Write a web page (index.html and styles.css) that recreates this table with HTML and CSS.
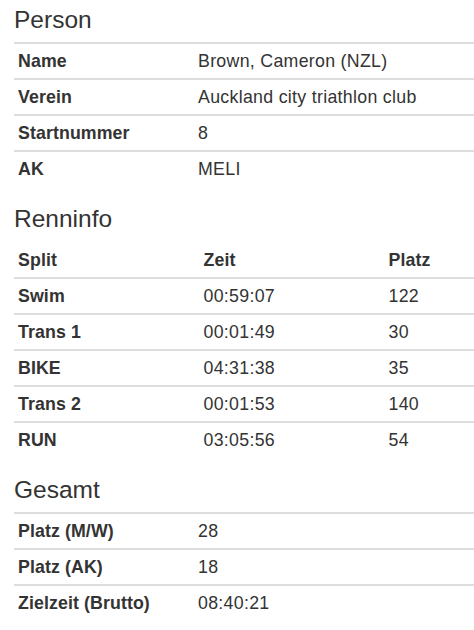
FILE: index.html
```html
<!DOCTYPE html>
<html lang="de">
<head>
<meta charset="utf-8">
<title>Ergebnis</title>
<link rel="stylesheet" href="styles.css">
</head>
<body>
<main class="page">
  <section class="block">
    <h3 class="title">Person</h3>
    <table class="info two-col">
      <tbody>
        <tr><th>Name</th><td>Brown, Cameron (NZL)</td></tr>
        <tr><th>Verein</th><td>Auckland city triathlon club</td></tr>
        <tr><th>Startnummer</th><td>8</td></tr>
        <tr><th>AK</th><td>MELI</td></tr>
      </tbody>
    </table>
  </section>
  <section class="block">
    <h3 class="title">Renninfo</h3>
    <table class="info three-col">
      <thead>
        <tr><th>Split</th><th>Zeit</th><th>Platz</th></tr>
      </thead>
      <tbody>
        <tr><th>Swim</th><td>00:59:07</td><td>122</td></tr>
        <tr><th>Trans 1</th><td>00:01:49</td><td>30</td></tr>
        <tr><th>BIKE</th><td>04:31:38</td><td>35</td></tr>
        <tr><th>Trans 2</th><td>00:01:53</td><td>140</td></tr>
        <tr><th>RUN</th><td>03:05:56</td><td>54</td></tr>
      </tbody>
    </table>
  </section>
  <section class="block">
    <h3 class="title">Gesamt</h3>
    <table class="info two-col">
      <tbody>
        <tr><th>Platz (M/W)</th><td>28</td></tr>
        <tr><th>Platz (AK)</th><td>18</td></tr>
        <tr><th>Zielzeit (Brutto)</th><td>08:40:21</td></tr>
      </tbody>
    </table>
  </section>
</main>
</body>
</html>
```
FILE: styles.css
```css
html, body {
  margin: 0;
  padding: 0;
  background: #ffffff;
}

body {
  font-family: "Liberation Sans", Arial, Helvetica, sans-serif;
  color: #333333;
}

.page {
  padding: 6px 0 0 14px;
  display: flex;
  flex-direction: column;
  gap: 19px;
}

.title {
  margin: 0 0 9px 0;
  font-size: 24.5px;
  line-height: 27px;
  font-weight: 400;
  color: #333333;
}

.info {
  width: 460px;
  border-collapse: collapse;
  border-spacing: 0;
  table-layout: fixed;
  font-size: 17.75px;
  line-height: 20px;
}

.info th,
.info td {
  padding: 7px 4px;
  text-align: left;
  vertical-align: top;
  border-top: 2px solid #dddddd;
}

.info th {
  font-weight: 700;
  letter-spacing: 0.1px;
}

.info td {
  font-weight: 400;
  letter-spacing: 0.3px;
}

.info thead th {
  border-top: 2px solid transparent;
}

.two-col th {
  width: 172px;
}

.three-col th:first-child {
  width: 177.5px;
}

.three-col thead th:nth-child(2) {
  width: 177px;
}
```
